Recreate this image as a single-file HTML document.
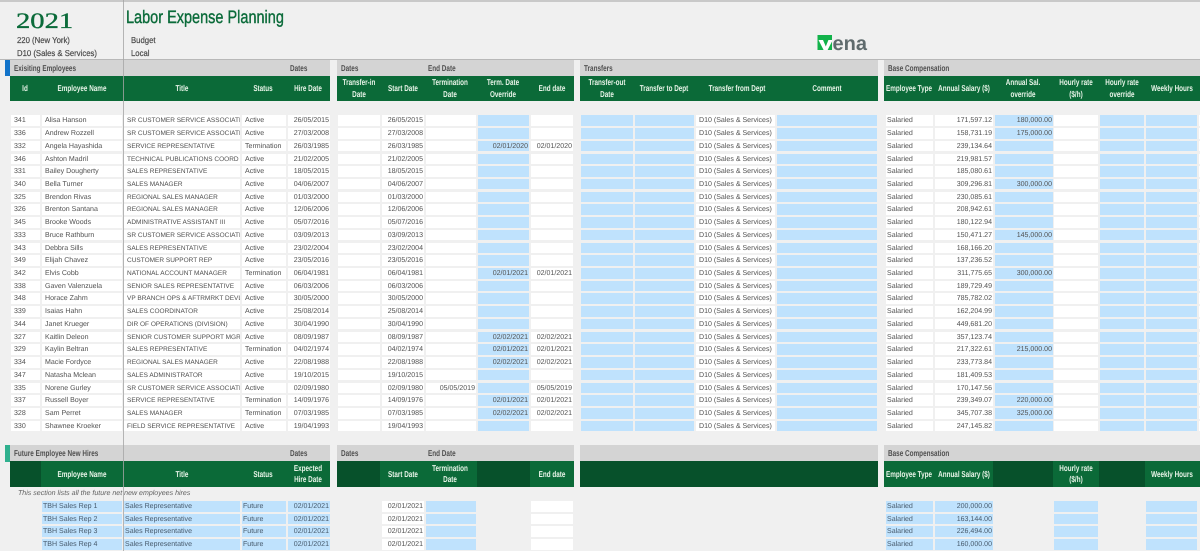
<!DOCTYPE html>
<html><head><meta charset="utf-8"><title>Labor Expense Planning</title>
<style>
html,body{margin:0;padding:0;background:#f0f0f0}
#p{position:relative;width:1200px;height:551px;overflow:hidden;background:#f0f0f0;font-family:"Liberation Sans",sans-serif;color:#505050;filter:blur(.3px);text-rendering:geometricPrecision}
#p>div,#p>b,#p>em{position:absolute;display:block}
.gr{background:#d4d4d4}
.gn{background:#0b6a38}
.dk{background:#07512b}
.h{font:bold 8.5px/11.5px "Liberation Sans",sans-serif;color:#e8f4e8;text-align:center;white-space:nowrap;transform:translateX(-50%) scaleX(.745)}
.g{font:bold 8.5px/16px "Liberation Sans",sans-serif;color:#505050;white-space:nowrap;transform-origin:0 0;transform:scaleX(.75)}
.t{font:8.5px/11px "Liberation Sans",sans-serif;color:#4a4a4a;white-space:nowrap;-webkit-text-stroke:.2px #4a4a4a;transform-origin:0 0;transform:scaleX(.91)}
.r{left:0;width:1200px;height:10.6px}
.r:not(.f)::after{content:"";position:absolute;left:1199px;top:0;width:1px;height:10.6px;background:#fff}
.r i{position:absolute;top:0;height:10.6px;font:normal 7.05px/11.8px "Liberation Sans",sans-serif;background:#fff;white-space:nowrap;overflow:hidden;box-sizing:border-box}
.r i:nth-child(1){left:11px;width:29px;padding-left:3px}
.r i:nth-child(2){left:42px;width:80px;padding-left:3px}
.r i:nth-child(3){left:124px;width:116px;padding-left:3px;font-size:6.5px}
.r i:nth-child(4){left:242px;width:44px;padding-left:3px}
.r i:nth-child(5){left:288px;width:42px;text-align:right;padding-right:1px}
.r i:nth-child(6){left:338px;width:42px}
.r i:nth-child(7){left:382px;width:42px;text-align:right;padding-right:1px}
.r i:nth-child(8){left:426px;width:50px;text-align:right;padding-right:1px}
.r i:nth-child(9){left:478px;width:51px;text-align:right;padding-right:1px;background:#bfe2fd}
.r i:nth-child(10){left:531px;width:42px;text-align:right;padding-right:1px}
.r i:nth-child(11){left:581px;width:52px;background:#bfe2fd}
.r i:nth-child(12){left:635px;width:59px;background:#bfe2fd}
.r i:nth-child(13){left:696px;width:79px;padding-left:3px}
.r i:nth-child(14){left:777px;width:100px;background:#bfe2fd}
.r i:nth-child(15){left:886px;width:47px;padding-left:1px}
.r i:nth-child(16){left:935px;width:58px;text-align:right;padding-right:1px}
.r i:nth-child(17){left:995px;width:58px;text-align:right;padding-right:1px;background:#bfe2fd}
.r i:nth-child(18){left:1054px;width:44px}
.r i:nth-child(19){left:1100px;width:44px;background:#bfe2fd}
.r i:nth-child(20){left:1146px;width:51px;background:#bfe2fd}
.f i{color:#46596b}
.f i:nth-child(1),.f i:nth-child(6),.f i:nth-child(9),.f i:nth-child(11),.f i:nth-child(12),.f i:nth-child(13),.f i:nth-child(14),.f i:nth-child(17),.f i:nth-child(19){background:none}
.f i:nth-child(2),.f i:nth-child(3),.f i:nth-child(4),.f i:nth-child(5),.f i:nth-child(8),.f i:nth-child(15),.f i:nth-child(16),.f i:nth-child(18){background:#bfe2fd}
.f i:nth-child(2){padding-left:1px}
.f i:nth-child(3){padding-left:1px;font-size:7.05px}
.f i:nth-child(4){padding-left:1px}
.f i:nth-child(7),.f i:nth-child(10){color:#505050}
</style></head><body><div id="p">
<div style="left:0;top:0;width:1200px;height:2px;background:#c9c9c9"></div>
<div style="left:16px;top:7px;font:22px/28px 'Liberation Serif',serif;color:#0b6b3a;transform-origin:0 0;transform:scaleX(1.3);-webkit-text-stroke:.35px #0b6b3a">2021</div>
<div class="t" style="left:17px;top:35px">220 (New York)</div>
<div class="t" style="left:17px;top:48px">D10 (Sales &amp; Services)</div>
<div style="left:126px;top:7px;font:18px/20px 'Liberation Sans',sans-serif;color:#0b6b3a;white-space:nowrap;transform-origin:0 0;transform:scaleX(.805);-webkit-text-stroke:.4px #0b6b3a">Labor Expense Planning</div>
<div class="t" style="left:130.5px;top:35px">Budget</div>
<div class="t" style="left:130.5px;top:48px">Local</div>
<svg style="position:absolute;left:810px;top:28px" width="70" height="30" viewBox="0 0 70 30"><rect x="7.5" y="7" width="14.5" height="15" fill="#12b24a"/><path d="M8.5 12H13L15.8 18.5L18.4 12H22V13.5L17.6 22H13.6Z" fill="#fff"/><text x="22.5" y="22" font-family="Liberation Sans" font-weight="bold" font-size="20" fill="#5f6b6d">ena</text></svg>

<div style="left:0;top:59px;width:1200px;height:1px;background:#b8b8b8"></div>
<div style="left:4.5px;top:60px;width:5px;height:15.7px;background:#1273c9"></div>
<div class="gr" style="left:10px;top:60px;width:320px;height:16px"></div>
<div class="gr" style="left:337px;top:60px;width:237px;height:16px"></div>
<div class="gr" style="left:580px;top:60px;width:298px;height:16px"></div>
<div class="gr" style="left:884px;top:60px;width:316px;height:16px"></div>
<div class="gn" style="left:10px;top:76px;width:320px;height:25px"></div>
<div class="gn" style="left:337px;top:76px;width:237px;height:25px"></div>
<div class="gn" style="left:580px;top:76px;width:298px;height:25px"></div>
<div class="gn" style="left:884px;top:76px;width:316px;height:25px"></div>
<b class="g" style="left:13.5px;top:60px">Exisiting Employees</b>
<b class="g" style="left:290px;top:60px">Dates</b>
<b class="g" style="left:340.5px;top:60px">Dates</b>
<b class="g" style="left:428px;top:60px">End Date</b>
<b class="g" style="left:584px;top:60px">Transfers</b>
<b class="g" style="left:888px;top:60px">Base Compensation</b>
<b class="h" style="left:25px;top:83px">Id</b>
<b class="h" style="left:81.7px;top:83px">Employee Name</b>
<b class="h" style="left:181.7px;top:83px">Title</b>
<b class="h" style="left:263.3px;top:83px">Status</b>
<b class="h" style="left:308.3px;top:83px">Hire Date</b>
<b class="h" style="left:358.7px;top:77.3px">Transfer-in<br>Date</b>
<b class="h" style="left:402.7px;top:83px">Start Date</b>
<b class="h" style="left:450.3px;top:77.3px">Termination<br>Date</b>
<b class="h" style="left:503.3px;top:77.3px">Term. Date<br>Override</b>
<b class="h" style="left:552.3px;top:83px">End date</b>
<b class="h" style="left:607px;top:77.3px">Transfer-out<br>Date</b>
<b class="h" style="left:664.3px;top:83px">Transfer to Dept</b>
<b class="h" style="left:737px;top:83px">Transfer from Dept</b>
<b class="h" style="left:827px;top:83px">Comment</b>
<b class="h" style="left:909px;top:83px">Employee Type</b>
<b class="h" style="left:963.7px;top:83px">Annual Salary ($)</b>
<b class="h" style="left:1023px;top:77.3px">Annual Sal.<br>override</b>
<b class="h" style="left:1076.3px;top:77.3px">Hourly rate<br>($/h)</b>
<b class="h" style="left:1122px;top:77.3px">Hourly rate<br>override</b>
<b class="h" style="left:1171.7px;top:83px">Weekly Hours</b>

<div class="r" style="top:115.3px"><i>341</i><i>Alisa Hanson</i><i>SR CUSTOMER SERVICE ASSOCIATE</i><i>Active</i><i>26/05/2015</i><i></i><i>26/05/2015</i><i></i><i></i><i></i><i></i><i></i><i>D10 (Sales &amp; Services)</i><i></i><i>Salaried</i><i>171,597.12</i><i>180,000.00</i><i></i><i></i><i></i></div>
<div class="r" style="top:128px"><i>336</i><i>Andrew Rozzell</i><i>SR CUSTOMER SERVICE ASSOCIATE</i><i>Active</i><i>27/03/2008</i><i></i><i>27/03/2008</i><i></i><i></i><i></i><i></i><i></i><i>D10 (Sales &amp; Services)</i><i></i><i>Salaried</i><i>158,731.19</i><i>175,000.00</i><i></i><i></i><i></i></div>
<div class="r" style="top:140.75px"><i>332</i><i>Angela Hayashida</i><i>SERVICE REPRESENTATIVE</i><i>Termination</i><i>26/03/1985</i><i></i><i>26/03/1985</i><i></i><i>02/01/2020</i><i>02/01/2020</i><i></i><i></i><i>D10 (Sales &amp; Services)</i><i></i><i>Salaried</i><i>239,134.64</i><i></i><i></i><i></i><i></i></div>
<div class="r" style="top:153.5px"><i>346</i><i>Ashton Madril</i><i>TECHNICAL PUBLICATIONS COORD</i><i>Active</i><i>21/02/2005</i><i></i><i>21/02/2005</i><i></i><i></i><i></i><i></i><i></i><i>D10 (Sales &amp; Services)</i><i></i><i>Salaried</i><i>219,981.57</i><i></i><i></i><i></i><i></i></div>
<div class="r" style="top:166.2px"><i>331</i><i>Bailey Dougherty</i><i>SALES REPRESENTATIVE</i><i>Active</i><i>18/05/2015</i><i></i><i>18/05/2015</i><i></i><i></i><i></i><i></i><i></i><i>D10 (Sales &amp; Services)</i><i></i><i>Salaried</i><i>185,080.61</i><i></i><i></i><i></i><i></i></div>
<div class="r" style="top:178.9px"><i>340</i><i>Bella Turner</i><i>SALES MANAGER</i><i>Active</i><i>04/06/2007</i><i></i><i>04/06/2007</i><i></i><i></i><i></i><i></i><i></i><i>D10 (Sales &amp; Services)</i><i></i><i>Salaried</i><i>309,296.81</i><i>300,000.00</i><i></i><i></i><i></i></div>
<div class="r" style="top:191.65px"><i>325</i><i>Brendon Rivas</i><i>REGIONAL SALES MANAGER</i><i>Active</i><i>01/03/2000</i><i></i><i>01/03/2000</i><i></i><i></i><i></i><i></i><i></i><i>D10 (Sales &amp; Services)</i><i></i><i>Salaried</i><i>230,085.61</i><i></i><i></i><i></i><i></i></div>
<div class="r" style="top:204.4px"><i>326</i><i>Brenton Santana</i><i>REGIONAL SALES MANAGER</i><i>Active</i><i>12/06/2006</i><i></i><i>12/06/2006</i><i></i><i></i><i></i><i></i><i></i><i>D10 (Sales &amp; Services)</i><i></i><i>Salaried</i><i>208,942.61</i><i></i><i></i><i></i><i></i></div>
<div class="r" style="top:217.1px"><i>345</i><i>Brooke Woods</i><i>ADMINISTRATIVE ASSISTANT III</i><i>Active</i><i>05/07/2016</i><i></i><i>05/07/2016</i><i></i><i></i><i></i><i></i><i></i><i>D10 (Sales &amp; Services)</i><i></i><i>Salaried</i><i>180,122.94</i><i></i><i></i><i></i><i></i></div>
<div class="r" style="top:229.8px"><i>333</i><i>Bruce Rathburn</i><i>SR CUSTOMER SERVICE ASSOCIATE</i><i>Active</i><i>03/09/2013</i><i></i><i>03/09/2013</i><i></i><i></i><i></i><i></i><i></i><i>D10 (Sales &amp; Services)</i><i></i><i>Salaried</i><i>150,471.27</i><i>145,000.00</i><i></i><i></i><i></i></div>
<div class="r" style="top:242.55px"><i>343</i><i>Debbra Sills</i><i>SALES REPRESENTATIVE</i><i>Active</i><i>23/02/2004</i><i></i><i>23/02/2004</i><i></i><i></i><i></i><i></i><i></i><i>D10 (Sales &amp; Services)</i><i></i><i>Salaried</i><i>168,166.20</i><i></i><i></i><i></i><i></i></div>
<div class="r" style="top:255.3px"><i>349</i><i>Elijah Chavez</i><i>CUSTOMER SUPPORT REP</i><i>Active</i><i>23/05/2016</i><i></i><i>23/05/2016</i><i></i><i></i><i></i><i></i><i></i><i>D10 (Sales &amp; Services)</i><i></i><i>Salaried</i><i>137,236.52</i><i></i><i></i><i></i><i></i></div>
<div class="r" style="top:268px"><i>342</i><i>Elvis Cobb</i><i>NATIONAL ACCOUNT MANAGER</i><i>Termination</i><i>06/04/1981</i><i></i><i>06/04/1981</i><i></i><i>02/01/2021</i><i>02/01/2021</i><i></i><i></i><i>D10 (Sales &amp; Services)</i><i></i><i>Salaried</i><i>311,775.65</i><i>300,000.00</i><i></i><i></i><i></i></div>
<div class="r" style="top:280.7px"><i>338</i><i>Gaven Valenzuela</i><i>SENIOR SALES REPRESENTATIVE</i><i>Active</i><i>06/03/2006</i><i></i><i>06/03/2006</i><i></i><i></i><i></i><i></i><i></i><i>D10 (Sales &amp; Services)</i><i></i><i>Salaried</i><i>189,729.49</i><i></i><i></i><i></i><i></i></div>
<div class="r" style="top:293.45px"><i>348</i><i>Horace Zahm</i><i>VP BRANCH OPS &amp; AFTRMRKT DEVL</i><i>Active</i><i>30/05/2000</i><i></i><i>30/05/2000</i><i></i><i></i><i></i><i></i><i></i><i>D10 (Sales &amp; Services)</i><i></i><i>Salaried</i><i>785,782.02</i><i></i><i></i><i></i><i></i></div>
<div class="r" style="top:306.2px"><i>339</i><i>Isaias Hahn</i><i>SALES COORDINATOR</i><i>Active</i><i>25/08/2014</i><i></i><i>25/08/2014</i><i></i><i></i><i></i><i></i><i></i><i>D10 (Sales &amp; Services)</i><i></i><i>Salaried</i><i>162,204.99</i><i></i><i></i><i></i><i></i></div>
<div class="r" style="top:318.9px"><i>344</i><i>Janet Krueger</i><i>DIR OF OPERATIONS (DIVISION)</i><i>Active</i><i>30/04/1990</i><i></i><i>30/04/1990</i><i></i><i></i><i></i><i></i><i></i><i>D10 (Sales &amp; Services)</i><i></i><i>Salaried</i><i>449,681.20</i><i></i><i></i><i></i><i></i></div>
<div class="r" style="top:331.6px"><i>327</i><i>Kaitlin Deleon</i><i>SENIOR CUSTOMER SUPPORT MGR</i><i>Active</i><i>08/09/1987</i><i></i><i>08/09/1987</i><i></i><i>02/02/2021</i><i>02/02/2021</i><i></i><i></i><i>D10 (Sales &amp; Services)</i><i></i><i>Salaried</i><i>357,123.74</i><i></i><i></i><i></i><i></i></div>
<div class="r" style="top:344.35px"><i>329</i><i>Kaylin Beltran</i><i>SALES REPRESENTATIVE</i><i>Termination</i><i>04/02/1974</i><i></i><i>04/02/1974</i><i></i><i>02/01/2021</i><i>02/01/2021</i><i></i><i></i><i>D10 (Sales &amp; Services)</i><i></i><i>Salaried</i><i>217,322.61</i><i>215,000.00</i><i></i><i></i><i></i></div>
<div class="r" style="top:357.1px"><i>334</i><i>Macie Fordyce</i><i>REGIONAL SALES MANAGER</i><i>Active</i><i>22/08/1988</i><i></i><i>22/08/1988</i><i></i><i>02/02/2021</i><i>02/02/2021</i><i></i><i></i><i>D10 (Sales &amp; Services)</i><i></i><i>Salaried</i><i>233,773.84</i><i></i><i></i><i></i><i></i></div>
<div class="r" style="top:369.8px"><i>347</i><i>Natasha Mclean</i><i>SALES ADMINISTRATOR</i><i>Active</i><i>19/10/2015</i><i></i><i>19/10/2015</i><i></i><i></i><i></i><i></i><i></i><i>D10 (Sales &amp; Services)</i><i></i><i>Salaried</i><i>181,409.53</i><i></i><i></i><i></i><i></i></div>
<div class="r" style="top:382.5px"><i>335</i><i>Norene Gurley</i><i>SR CUSTOMER SERVICE ASSOCIATE</i><i>Active</i><i>02/09/1980</i><i></i><i>02/09/1980</i><i>05/05/2019</i><i></i><i>05/05/2019</i><i></i><i></i><i>D10 (Sales &amp; Services)</i><i></i><i>Salaried</i><i>170,147.56</i><i></i><i></i><i></i><i></i></div>
<div class="r" style="top:395.25px"><i>337</i><i>Russell Boyer</i><i>SERVICE REPRESENTATIVE</i><i>Termination</i><i>14/09/1976</i><i></i><i>14/09/1976</i><i></i><i>02/01/2021</i><i>02/01/2021</i><i></i><i></i><i>D10 (Sales &amp; Services)</i><i></i><i>Salaried</i><i>239,349.07</i><i>220,000.00</i><i></i><i></i><i></i></div>
<div class="r" style="top:408px"><i>328</i><i>Sam Perret</i><i>SALES MANAGER</i><i>Termination</i><i>07/03/1985</i><i></i><i>07/03/1985</i><i></i><i>02/02/2021</i><i>02/02/2021</i><i></i><i></i><i>D10 (Sales &amp; Services)</i><i></i><i>Salaried</i><i>345,707.38</i><i>325,000.00</i><i></i><i></i><i></i></div>
<div class="r" style="top:420.7px"><i>330</i><i>Shawnee Kroeker</i><i>FIELD SERVICE REPRESENTATIVE</i><i>Active</i><i>19/04/1993</i><i></i><i>19/04/1993</i><i></i><i></i><i></i><i></i><i></i><i>D10 (Sales &amp; Services)</i><i></i><i>Salaried</i><i>247,145.82</i><i></i><i></i><i></i><i></i></div>

<div style="left:4.5px;top:445px;width:5px;height:16.5px;background:#2fb08e"></div>
<div class="gr" style="left:10px;top:445px;width:320px;height:16px"></div>
<div class="gr" style="left:337px;top:445px;width:237px;height:16px"></div>
<div class="gr" style="left:580px;top:445px;width:298px;height:16px"></div>
<div class="gr" style="left:884px;top:445px;width:316px;height:16px"></div>
<div class="dk" style="left:10px;top:461px;width:31px;height:25.5px"></div>
<div class="gn" style="left:41px;top:461px;width:289px;height:25.5px"></div>
<div class="dk" style="left:337px;top:461px;width:43px;height:25.5px"></div>
<div class="gn" style="left:380px;top:461px;width:97px;height:25.5px"></div>
<div class="dk" style="left:477px;top:461px;width:53px;height:25.5px"></div>
<div class="gn" style="left:530px;top:461px;width:44px;height:25.5px"></div>
<div class="dk" style="left:580px;top:461px;width:298px;height:25.5px"></div>
<div class="gn" style="left:884px;top:461px;width:109px;height:25.5px"></div>
<div class="dk" style="left:993px;top:461px;width:60px;height:25.5px"></div>
<div class="gn" style="left:1053px;top:461px;width:46px;height:25.5px"></div>
<div class="dk" style="left:1099px;top:461px;width:46px;height:25.5px"></div>
<div class="gn" style="left:1145px;top:461px;width:55px;height:25.5px"></div>
<b class="g" style="left:13.5px;top:445px">Future Employee New Hires</b>
<b class="g" style="left:290px;top:445px">Dates</b>
<b class="g" style="left:340.5px;top:445px">Dates</b>
<b class="g" style="left:428px;top:445px">End Date</b>
<b class="g" style="left:888px;top:445px">Base Compensation</b>
<b class="h" style="left:81.7px;top:468.6px">Employee Name</b>
<b class="h" style="left:181.7px;top:468.6px">Title</b>
<b class="h" style="left:263.3px;top:468.6px">Status</b>
<b class="h" style="left:308.3px;top:462.8px">Expected<br>Hire Date</b>
<b class="h" style="left:402.7px;top:468.6px">Start Date</b>
<b class="h" style="left:450.3px;top:462.8px">Termination<br>Date</b>
<b class="h" style="left:552.3px;top:468.6px">End date</b>
<b class="h" style="left:909px;top:468.6px">Employee Type</b>
<b class="h" style="left:963.7px;top:468.6px">Annual Salary ($)</b>
<b class="h" style="left:1076.3px;top:462.8px">Hourly rate<br>($/h)</b>
<b class="h" style="left:1171.7px;top:468.6px">Weekly Hours</b>
<em style="left:18px;top:488.5px;font:italic 7.05px/10px 'Liberation Sans',sans-serif;color:#5f5f5f;white-space:nowrap">This section lists all the future net new employees hires</em>

<div class="r f" style="top:501px"><i></i><i>TBH Sales Rep 1</i><i>Sales Representative</i><i>Future</i><i>02/01/2021</i><i></i><i>02/01/2021</i><i></i><i></i><i></i><i></i><i></i><i></i><i></i><i>Salaried</i><i>200,000.00</i><i></i><i></i><i></i><i></i></div>
<div class="r f" style="top:513.7px"><i></i><i>TBH Sales Rep 2</i><i>Sales Representative</i><i>Future</i><i>02/01/2021</i><i></i><i>02/01/2021</i><i></i><i></i><i></i><i></i><i></i><i></i><i></i><i>Salaried</i><i>163,144.00</i><i></i><i></i><i></i><i></i></div>
<div class="r f" style="top:526.4px"><i></i><i>TBH Sales Rep 3</i><i>Sales Representative</i><i>Future</i><i>02/01/2021</i><i></i><i>02/01/2021</i><i></i><i></i><i></i><i></i><i></i><i></i><i></i><i>Salaried</i><i>226,494.00</i><i></i><i></i><i></i><i></i></div>
<div class="r f" style="top:539.1px"><i></i><i>TBH Sales Rep 4</i><i>Sales Representative</i><i>Future</i><i>02/01/2021</i><i></i><i>02/01/2021</i><i></i><i></i><i></i><i></i><i></i><i></i><i></i><i>Salaried</i><i>160,000.00</i><i></i><i></i><i></i><i></i></div>
<div style="left:123px;top:0;width:1px;height:551px;background:rgba(165,165,165,.8)"></div>
</div></body></html>
